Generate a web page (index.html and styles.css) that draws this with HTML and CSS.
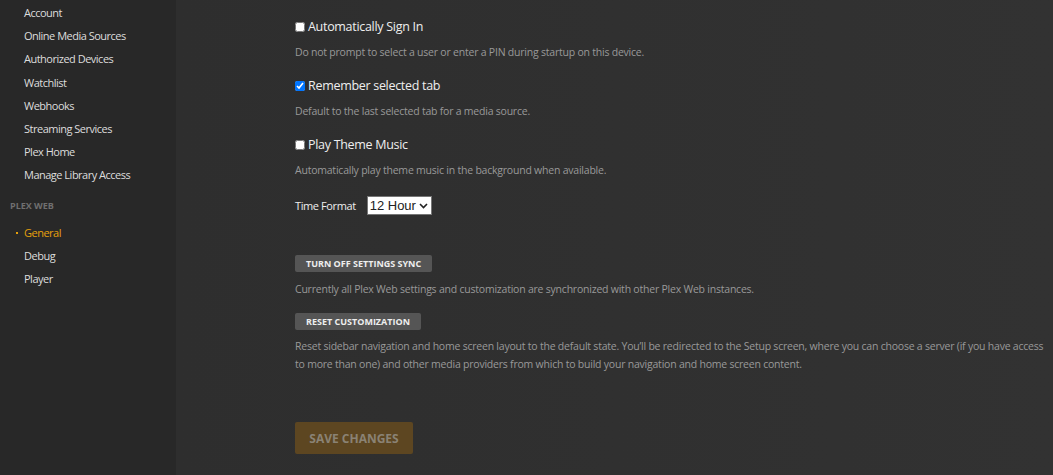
FILE: index.html
```html
<!DOCTYPE html>
<html>
  <head>
    <link rel="stylesheet" href="styles.css">
  </head>
  <body>
    <div class="page">
      <nav class="sidebar">
        <ul class="nav-list">
          <li>Account</li>
          <li>Online Media Sources</li>
          <li>Authorized Devices</li>
          <li>Watchlist</li>
          <li>Webhooks</li>
          <li>Streaming Services</li>
          <li>Plex Home</li>
          <li>Manage Library Access</li>
        </ul>
        <h4 class="nav-header">Plex Web</h4>
        <ul class="nav-list">
          <li class="active">General</li>
          <li>Debug</li>
          <li>Player</li>
        </ul>
      </nav>

      <main class="content">
        <div class="setting">
          <label class="check"><input type="checkbox"> Automatically Sign In</label>
          <p class="desc">Do not prompt to select a user or enter a PIN during startup on this device.</p>
        </div>
        <div class="setting">
          <label class="check"><input type="checkbox" checked> Remember selected tab</label>
          <p class="desc">Default to the last selected tab for a media source.</p>
        </div>
        <div class="setting">
          <label class="check"><input type="checkbox"> Play Theme Music</label>
          <p class="desc">Automatically play theme music in the background when available.</p>
        </div>
        <div class="setting time-row">
          <span class="field-label">Time Format</span>
          <div class="select">
            <select class="time-select">
              <option>12 Hour</option>
              <option>24 Hour</option>
            </select>
            <svg width="9" height="6" viewBox="0 0 9 6"><path d="M1 1l3.5 3.5L8 1" fill="none" stroke="#222" stroke-width="1.6"/></svg>
          </div>
        </div>

        <div class="action first">
          <button class="btn">Turn off settings sync</button>
          <p class="desc">Currently all Plex Web settings and customization are synchronized with other Plex Web instances.</p>
        </div>
        <div class="action">
          <button class="btn">Reset customization</button>
          <p class="desc wide">Reset sidebar navigation and home screen layout to the default state. You’ll be redirected to the Setup screen, where you can choose a server (if you have access to more than one) and other media providers from which to build your navigation and home screen content.</p>
        </div>

        <button class="save" disabled>Save Changes</button>
      </main>
    </div>
  </body>
</html>
```

FILE: styles.css
```css
* { margin: 0; padding: 0; box-sizing: border-box; }

html, body { height: 100%; }

body {
  font-family: "Open Sans", "Liberation Sans", sans-serif;
  background: #2f2f2f;
  color: #eee;
  overflow: hidden;
}

.page { display: flex; height: 100%; }

/* sidebar */
.sidebar {
  width: 176px;
  flex-shrink: 0;
  background: #282828;
  padding-top: 1px;
}

.nav-list { list-style: none; }
.nav-list li {
  position: relative;
  padding-left: 24px;
  font-size: 11px;
  letter-spacing: -0.5px;
  line-height: 23.2px;
  color: #ddd;
}
.nav-list li.active { color: #e5a00d; }
.nav-list li.active:before {
  content: '';
  position: absolute;
  left: 16px; top: 11px;
  width: 2px; height: 2px;
  background: #e5a00d;
}

.nav-header {
  margin: 7px 0 4px;
  padding-left: 10px;
  font-size: 9px;
  line-height: 23px;
  font-weight: 700;
  text-transform: uppercase;
  color: #6f6f6f;
}

/* settings */
.content {
  flex: 1;
  padding: 17px 0 0 119px;
  background: linear-gradient(90deg, #2e2e2e, #323232);
}

.setting { margin-bottom: 15px; }

.check {
  display: flex;
  align-items: center;
  font-size: 12.5px;
  letter-spacing: -0.3px;
  line-height: 20px;
  color: #eee;
}
.check input {
  width: 10px; height: 10px;
  margin: 0 3px 0 0;
}

.desc {
  margin-top: 6px;
  font-size: 10.5px;
  letter-spacing: -0.22px;
  line-height: 18px;
  color: #999;
}

.time-row {
  display: flex;
  align-items: center;
  gap: 11px;
  padding-top: 2px;
}
.field-label { font-size: 11px; letter-spacing: -0.4px; color: #eee; }

.select {
  display: flex;
  align-items: center;
  height: 19px;
  padding: 0 3px 0 2px;
  background: #fff;
  border: 1px solid #767676;
}
.time-select {
  appearance: none;
  border: none;
  outline: none;
  background: transparent;
  padding: 0 2px 0 0;
  font-family: "Liberation Sans", sans-serif;
  font-size: 13px;
  color: #222;
}

.action { margin-bottom: 10px; }
.action.first { margin-top: 35px; }
.action .desc { margin-top: 8px; }
.action .desc.wide { margin-top: 7px; }

.btn {
  height: 17px;
  padding: 0 11px;
  border: none;
  border-radius: 2px;
  background: #555;
  color: #eee;
  font-family: inherit;
  font-size: 9px;
  font-weight: 700;
  text-transform: uppercase;
}

.desc.wide { max-width: 760px; }

.save {
  margin-top: 39px;
  width: 118px;
  height: 32px;
  border: none;
  border-radius: 2px;
  background: #5d4621;
  color: #8a8274;
  font-family: inherit;
  font-size: 12px;
  font-weight: 700;
  text-transform: uppercase;
}
```
